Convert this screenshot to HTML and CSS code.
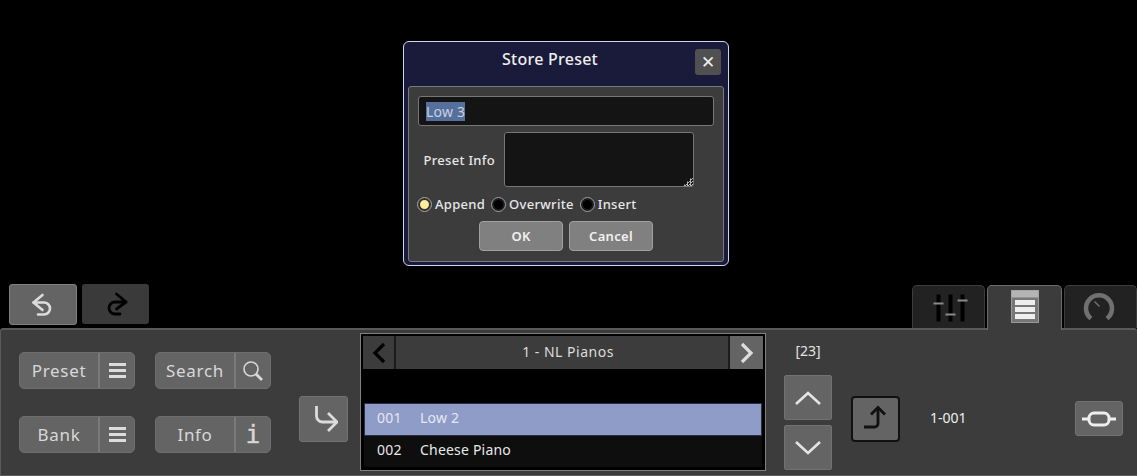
FILE: index.html
```html
<!DOCTYPE html>
<html lang="en">
<head>
  <meta charset="UTF-8">
  <title>Store Preset</title>
  <link rel="stylesheet" href="styles.css">
</head>
<body>
  <div class="topbar">
    <div class="history">
      <button class="hist-btn undo">
        <svg width="26" height="26" viewBox="0 0 26 26" fill="none" stroke="#dcdcdc" stroke-width="2.6" stroke-linecap="round" stroke-linejoin="round"><path d="M12.500 3 3.500 10.500 12.500 18"/><path d="M3.500 10.500H14a6 6 0 0 1 0 12H8"/></svg>
      </button>
      <button class="hist-btn redo">
        <svg width="26" height="26" viewBox="0 0 26 26" fill="none" stroke="#000" stroke-width="2.8" stroke-linecap="round" stroke-linejoin="round"><path d="M13.500 3 23 11 13.500 18"/><path d="M23 11H12a6 6 0 0 0 0 12h5"/></svg>
      </button>
    </div>
    <div class="tabs">
      <div class="tab">
        <svg width="40" height="30" viewBox="0 0 40 30"><g fill="#000"><rect x="7.5" y="2.5" width="4" height="27"/><rect x="19.500" y="2.5" width="4" height="27"/><rect x="31.500" y="2.5" width="4" height="27"/></g><g fill="#8a8a8a"><rect x="4.5" y="10.500" width="10" height="2"/><rect x="16.500" y="21.500" width="10" height="2"/><rect x="28.500" y="7.5" width="10" height="2"/></g></svg>
      </div>
      <div class="tab active">
        <svg width="28" height="33" viewBox="0 0 28 33"><rect x="0.5" y="0.5" width="27" height="32" fill="#777" stroke="#999"/><rect x="0.5" y="0.5" width="27" height="7" fill="#b4b4b4"/><g fill="#eee"><rect x="4" y="10" width="20" height="5"/><rect x="4" y="17" width="20" height="5"/><rect x="4" y="24" width="20" height="5"/></g></svg>
      </div>
      <div class="tab gauge">
        <svg width="32" height="32" viewBox="0 0 32 32" fill="none" stroke="#707070"><path d="M8 27.500a13 13 0 1 1 16 0" stroke-width="4.6"/><path d="M11.500 10.500l5 5" stroke-width="1.4"/></svg>
      </div>
    </div>
  </div>

  <div class="panel">
    <div class="btn-col">
      <div class="split-btn"><span class="split-label">Preset</span><span class="split-icon"><span class="burger"></span></span></div>
      <div class="split-btn"><span class="split-label">Bank</span><span class="split-icon"><span class="burger"></span></span></div>
    </div>
    <div class="btn-col">
      <div class="split-btn"><span class="split-label">Search</span><span class="split-icon">
        <svg width="24" height="24" viewBox="0 0 24 24" fill="none" stroke="#d8d8d8"><circle cx="10" cy="10" r="7" stroke-width="1.6"/><path d="M15 15l6 6" stroke-width="2.8"/></svg>
      </span></div>
      <div class="split-btn"><span class="split-label">Info</span><span class="split-icon info-i">i</span></div>
    </div>
    <button class="square-btn load-btn">
      <svg width="28" height="28" viewBox="0 0 28 28" fill="none" stroke="#dcdcdc" stroke-width="2.8"><path d="M6.500 1v10a6 6 0 0 0 6 6H27"/><path d="M18 8l9 9-9 9"/></svg>
    </button>

    <div class="browser">
      <div class="browser-head">
        <button class="nav-btn prev"><svg width="16" height="22" viewBox="0 0 16 22" fill="none" stroke="#000" stroke-width="3.2"><path d="M13 2 4 11l9 9"/></svg></button>
        <div class="bank-name">1 - NL Pianos</div>
        <button class="nav-btn next"><svg width="16" height="22" viewBox="0 0 16 22" fill="none" stroke="#ddd" stroke-width="3.2"><path d="M3 2l9 9-9 9"/></svg></button>
      </div>
      <div class="browser-gap"></div>
      <div class="row selected"><span class="num">001</span><span>Low 2</span></div>
      <div class="row"><span class="num">002</span><span>Cheese Piano</span></div>
    </div>

    <div class="updown">
      <div class="count">[23]</div>
      <button class="step-btn up"><svg width="28" height="16" viewBox="0 0 28 16" fill="none" stroke="#e4e4e4" stroke-width="2.6"><path d="M2 14 14 3l12 11"/></svg></button>
      <button class="step-btn"><svg width="28" height="16" viewBox="0 0 28 16" fill="none" stroke="#e4e4e4" stroke-width="2.6"><path d="M2 2l12 11L26 2"/></svg></button>
    </div>
    <button class="square-btn store-btn">
      <svg width="28" height="28" viewBox="0 0 28 28" fill="none" stroke="#111" stroke-width="2.8"><path d="M2 22h10.500a3.500 3.500 0 0 0 3.500-3.500V3"/><path d="M9 9.500l7-7 7 7"/></svg>
    </button>
    <div class="location">1-001</div>
    <button class="link-btn">
      <svg width="34" height="18" viewBox="0 0 34 18" fill="none" stroke="#eee"><path d="M0 9h7M27 9h7" stroke-width="3"/><rect x="7" y="3" width="20" height="12" rx="5" stroke-width="3"/></svg>
    </button>
  </div>

  <div class="dialog">
    <div class="dialog-head">
      <div class="dialog-title">Store Preset</div>
      <button class="close-btn">✕</button>
    </div>
    <div class="dialog-body">
      <div class="name-field"><span class="sel">Low 3</span></div>
      <div class="info-row">
        <label class="info-label">Preset Info</label>
        <div class="info-area"><span class="grip"></span></div>
      </div>
      <div class="radios">
        <span class="radio on"><i></i>Append</span>
        <span class="radio"><i></i>Overwrite</span>
        <span class="radio"><i></i>Insert</span>
      </div>
      <div class="dialog-btns">
        <button class="dlg-btn">OK</button>
        <button class="dlg-btn">Cancel</button>
      </div>
    </div>
  </div>
</body>
</html>
```

FILE: styles.css
```css
html, body {
  margin: 0;
  height: 476px;
  overflow: hidden;
}
body {
  background: #000;
  font-family: "Noto Sans", sans-serif;
  color: #ddd;
  display: flex;
  flex-direction: column;
  justify-content: flex-end;
  position: relative;
}
button {
  font-family: inherit;
  padding: 0;
  border: none;
  display: flex;
  align-items: center;
  justify-content: center;
}

/* top strip */
.topbar {
  display: flex;
  justify-content: space-between;
  align-items: flex-end;
  height: 46px;
  position: relative;
  z-index: 1;
}
.history {
  display: flex;
  gap: 5px;
  padding: 0 0 3px 9px;
}
.hist-btn {
  width: 68px;
  height: 41px;
  border-radius: 3px;
}
.undo {
  background: #646464;
  border: 1px solid #808080;
  box-sizing: border-box;
}
.redo {
  width: 67px;
  height: 40px;
  margin-bottom: 1px;
  background: #3a3a3a;
}
.tabs {
  display: flex;
  gap: 2px;
}
.tab {
  width: 73px;
  height: 43px;
  box-sizing: border-box;
  background: #222;
  border: 1px solid #3c3c3c;
  border-bottom: none;
  border-radius: 5px 5px 0 0;
  display: flex;
  align-items: center;
  justify-content: center;
}
.tab.active {
  width: 75px;
  height: 45px;
  margin-bottom: -2px;
  background: #3c3c3c;
  border-color: #6c6c6c;
  padding-bottom: 3px;
}
.tab.gauge {
  padding-right: 3px;
}

/* bottom panel */
.panel {
  height: 148px;
  box-sizing: border-box;
  background: #3c3c3c;
  border-top: 2px solid #5a5a5a;
  border-bottom: 1px solid #5a5a5a;
  border-left: 1px solid #5a5a5a;
  border-radius: 3px 3px 0 0;
  display: flex;
  align-items: flex-start;
}
.btn-col {
  display: flex;
  flex-direction: column;
  gap: 27px;
  padding-top: 22px;
  margin-left: 18px;
}
.btn-col + .btn-col {
  margin-left: 20px;
}
.split-btn {
  width: 116px;
  height: 37px;
  box-sizing: border-box;
  display: flex;
  background: #646464;
  border: 1px solid #6e6e6e;
  border-radius: 5px;
  font-size: 17px;
  letter-spacing: 0.67px;
  color: #d8d8d8;
}
.split-label {
  width: 78px;
  padding-bottom: 1px;
  display: flex;
  align-items: center;
  justify-content: center;
}
.split-icon {
  flex: 1;
  border-left: 2px solid #7a7a7a;
  display: flex;
  align-items: center;
  justify-content: center;
}
.burger {
  width: 17px;
  height: 3px;
  background: #dcdcdc;
  box-shadow: 0 -6px 0 #dcdcdc, 0 6px 0 #dcdcdc;
}
.info-i {
  font-family: "DejaVu Sans Mono", monospace;
  font-size: 24px;
  letter-spacing: 0;
  -webkit-text-stroke: 0.5px #d2d2d2;
}
.square-btn {
  width: 49px;
  height: 46px;
  box-sizing: border-box;
  background: #646464;
  border: 1px solid #727272;
  border-radius: 3px;
  margin-top: 66px;
}
.load-btn {
  margin-left: 28px;
}
.browser {
  width: 406px;
  height: 138px;
  box-sizing: border-box;
  margin: 3px 0 0 12px;
  background: #000;
  border: 1px solid #808080;
  padding: 2px;
  display: flex;
  flex-direction: column;
}
.browser-head {
  display: flex;
  height: 33px;
  flex: none;
  background: #3c3c3c;
}
.nav-btn {
  width: 33px;
  background: #3c3c3c;
  flex: none;
}
.prev {
  border-right: 2px solid #1c1c1c;
}
.next {
  background: #646464;
  margin-left: auto;
}
.bank-name {
  flex: 1;
  display: flex;
  align-items: center;
  justify-content: center;
  font-size: 14px;
  letter-spacing: 0.5px;
  padding: 0 0 2px 12px;
  border-right: 2px solid #1c1c1c;
}
.browser-gap {
  height: 34px;
  flex: none;
}
.row {
  height: 31px;
  flex: none;
  display: flex;
  align-items: center;
  background: #0e0e0e;
  color: #e8e8e8;
  margin: 0 1px;
  box-sizing: border-box;
  padding: 0 0 5px 13px;
  font-size: 14px;
  letter-spacing: 0.2px;
}
.row.selected {
  height: 33px;
  background: #909cc8;
  border: 1px solid #2a3048;
  color: #e4e8f0;
  padding-left: 12px;
}
.num {
  width: 43px;
}
.updown {
  display: flex;
  flex-direction: column;
  align-items: center;
  width: 48px;
  margin-left: 18px;
}
.count {
  height: 45px;
  line-height: 42px;
  font-size: 14px;
  color: #e4e4e4;
}
.step-btn {
  width: 48px;
  height: 45px;
  background: #646464;
  border: 1px solid #727272;
  box-sizing: border-box;
  border-radius: 2px;
}
.step-btn.up {
  margin-bottom: 5px;
}
.store-btn {
  margin-left: 19px;
  border: 2px solid #111;
  border-radius: 4px;
}
.location {
  margin: 78px 0 0 30px;
  font-size: 14px;
  line-height: 20px;
  color: #eee;
}
.link-btn {
  width: 48px;
  height: 35px;
  background: #646464;
  border: 1px solid #727272;
  box-sizing: border-box;
  border-radius: 3px;
  margin: 71px 0 0 108px;
}

/* modal sits over everything */
.dialog {
  position: absolute;
  left: 403px;
  top: 41px;
  width: 326px;
  height: 225px;
  box-sizing: border-box;
  background: #1a1a3a;
  border: 1px solid #c8d8f0;
  border-radius: 6px;
  padding: 0 4px 3px;
  display: flex;
  flex-direction: column;
  z-index: 5;
}
.dialog-head {
  height: 44px;
  flex: none;
  display: flex;
  justify-content: center;
  position: relative;
}
.dialog-title {
  font-size: 16px;
  font-weight: 500;
  letter-spacing: 0.25px;
  line-height: 35px;
  color: #eee;
  padding-right: 32px;
}
.close-btn {
  position: absolute;
  right: 3px;
  top: 7px;
  width: 26px;
  height: 26px;
  background: #505050;
  color: #eee;
  border-radius: 3px;
  font-size: 17px;
  font-family: "DejaVu Sans", sans-serif;
}
.dialog-body {
  flex: 1;
  background: #3c3c3c;
  border: 1px solid #7a7a7a;
  border-radius: 3px;
  padding: 9px 9px 0;
  display: flex;
  flex-direction: column;
  font-size: 14px;
  letter-spacing: 0.2px;
  color: #e8e8e8;
}
.name-field {
  height: 30px;
  box-sizing: border-box;
  background: #141414;
  border: 1px solid #777;
  border-radius: 3px;
  padding-left: 7px;
  display: flex;
  align-items: center;
  color: #c8d0e0;
}
.sel {
  background: #56709c;
  line-height: 19px;
}
.info-row {
  display: flex;
  align-items: center;
  margin-top: 6px;
}
.info-label {
  width: 77px;
  text-align: right;
  font-size: 13px;
  font-weight: 500;
  letter-spacing: 0.3px;
  margin-right: 9px;
  white-space: nowrap;
}
.info-area {
  width: 190px;
  height: 55px;
  box-sizing: border-box;
  background: #141414;
  border: 1px solid #777;
  border-radius: 3px;
  position: relative;
}
.grip {
  position: absolute;
  right: 0;
  bottom: 0;
  width: 10px;
  height: 10px;
  background: repeating-conic-gradient(#bbb 0 25%, transparent 0 50%) 0 0 / 3px 3px;
  clip-path: polygon(100% 0, 100% 100%, 0 100%);
}
.radios {
  display: flex;
  gap: 6px;
  margin: 7px 0 0 -1px;
  height: 20px;
  align-items: center;
  font-size: 13px;
  font-weight: 500;
  letter-spacing: 0.3px;
}
.radio {
  display: flex;
  align-items: center;
  gap: 3px;
}
.radio i {
  width: 9px;
  height: 9px;
  border-radius: 50%;
  background: #000;
  border: 3px solid #1c1c1c;
  outline: 1px solid #aaa;
  outline-offset: -1px;
}
.radio.on i {
  background: #ffee99;
  border-color: #333;
}
.dialog-btns {
  display: flex;
  justify-content: center;
  gap: 6px;
  margin-top: 7px;
}
.dlg-btn {
  width: 84px;
  height: 30px;
  box-sizing: border-box;
  background: #808080;
  border: 1px solid #a0a0a0;
  border-radius: 4px;
  color: #f0f0f0;
  font-size: 13px;
  font-weight: 600;
  letter-spacing: 0.3px;
}
```
